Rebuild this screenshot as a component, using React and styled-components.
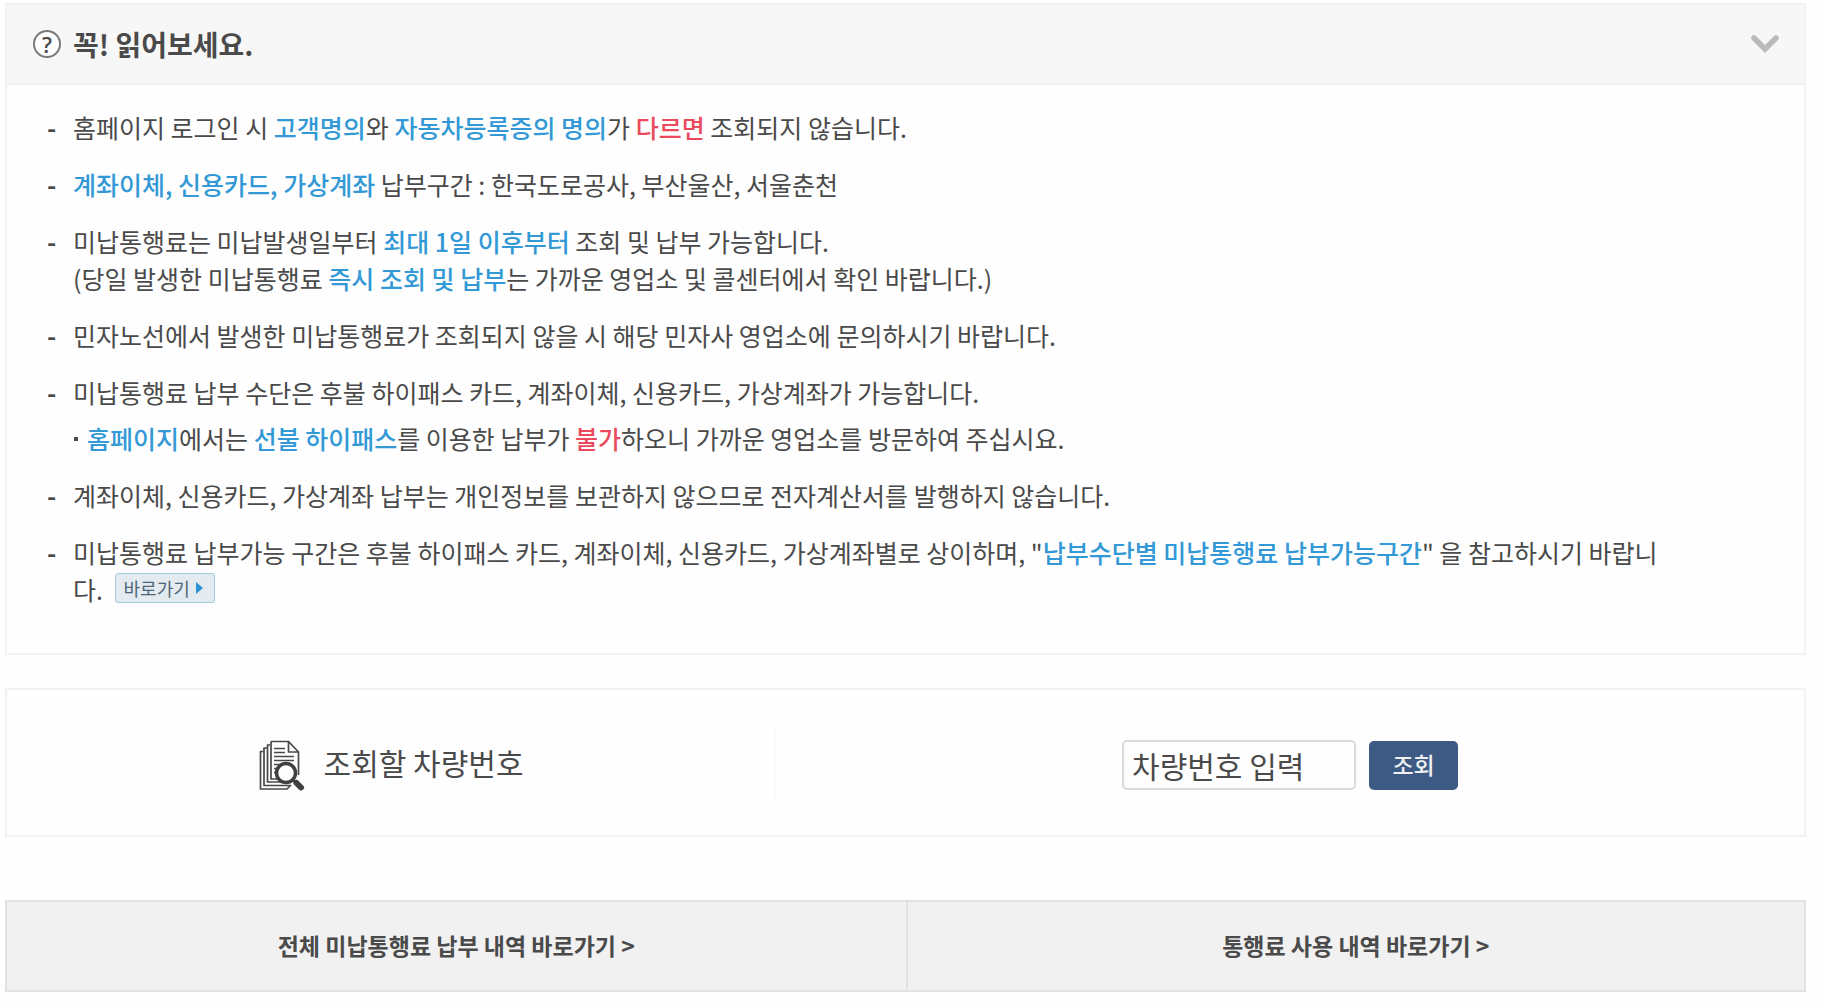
import React, { useState } from "react";
import styled, { createGlobalStyle } from "styled-components";

const GlobalStyle = createGlobalStyle`
  * {
    box-sizing: border-box;
  }

  body {
    margin: 0;
    background: #fefefe;
    color: #4a4a4a;
    font-family: "Noto Sans CJK KR", "Noto Sans", sans-serif;
    font-size: 25px;
    line-height: 37px;
  }

  button,
  input {
    font-family: inherit;
  }
`;

const Page = styled.main`
  padding: 3px 16px 14px 5px;
`;

const Panel = styled.section`
  border: 2px solid #f2f2f2;
  background: #fefefe;
`;

const NoticeTitle = styled.h2`
  margin: 0;
  font-size: 28px;
  line-height: 40px;
`;

const NoticeToggle = styled.button`
  display: flex;
  align-items: center;
  width: 100%;
  padding: 19px 23px 19px 26px;
  border: 0;
  border-bottom: 2px solid #f2f2f2;
  background: #f7f7f7;
  color: inherit;
  font: inherit;
  text-align: left;
  cursor: pointer;
`;

const QuestionMark = styled.span`
  display: flex;
  justify-content: center;
  align-items: center;
  width: 28px;
  height: 28px;
  margin-right: 12px;
  border: 2px solid #7a7a7a;
  border-radius: 100%;
  background: #fefefe;
  font-family: "Open Sans", sans-serif;
  font-size: 22px;
  font-weight: 600;
  line-height: 24px;
`;

const ToggleLabel = styled.span`
  flex-grow: 1;
`;

const NoticeList = styled.ul`
  display: flex;
  flex-direction: column;
  gap: 20px;
  margin: 0;
  padding: 24px 130px 45px 40px;
  list-style: none;
`;

const NoticeItem = styled.li`
  display: flex;

  &::before {
    content: "-";
    flex: 0 0 26px;
    font-weight: bold;
  }
`;

const SubNotice = styled.p`
  display: flex;
  align-items: center;
  gap: 9px;
  margin: 9px 0 0;

  &::before {
    content: "";
    width: 4px;
    height: 4px;
    margin-left: 1px;
    background: #4a4a4a;
  }
`;

const Blue = styled.strong`
  color: #3399d6;
  font-weight: 500;
`;

const Red = styled.strong`
  color: #ea4a5c;
  font-weight: 500;
`;

const ShortcutLink = styled.a`
  display: inline-flex;
  align-items: center;
  gap: 6px;
  height: 30px;
  margin-left: 6px;
  padding: 0 11px 0 8px;
  border: 1px solid #a3cbe0;
  border-radius: 3px;
  background: #e4ebf0;
  color: #4d6678;
  font-size: 18px;
  line-height: 28px;
  text-decoration: none;
  vertical-align: 4px;
`;

const SearchPanel = styled(Panel)`
  display: flex;
  align-items: center;
  margin-top: 33px;
  padding: 32px 0 33px;
`;

const SearchLabel = styled.label`
  display: flex;
  justify-content: center;
  align-items: center;
  gap: 19px;
  width: 42.8%;
  height: 80px;
  border-right: 1px solid #fafafa;
  font-size: 30px;
`;

const SearchForm = styled.form`
  display: flex;
  align-items: center;
  flex-grow: 1;
  justify-content: center;
  gap: 13px;
  padding-top: 6px;
`;

const CarNumberInput = styled.input`
  width: 234px;
  height: 50px;
  padding: 0 8px;
  border: 2px solid #dadada;
  border-radius: 5px;
  background: #fefefe;
  color: #4a4a4a;
  font-size: 30px;

  &::placeholder {
    color: #4a4a4a;
    opacity: 1;
  }
`;

const SearchButton = styled.button`
  width: 89px;
  height: 49px;
  padding: 0 0 2px;
  border: 0;
  border-radius: 5px;
  background: #3d5a85;
  color: #f0f0f0;
  font-size: 23px;
  font-weight: 500;
  cursor: pointer;
`;

const HistoryNav = styled.nav`
  display: grid;
  grid-template-columns: 1fr 1fr;
  margin-top: 63px;
  border: 2px solid #e2e2e2;
`;

const HistoryLink = styled.a`
  padding: 25px 0 26px;
  background: #f1f1f1;
  color: #4a4a4a;
  font-size: 23px;
  font-weight: bold;
  text-align: center;
  text-decoration: none;

  & + & {
    border-left: 2px solid #e2e2e2;
  }
`;

const ChevronIcon = () => (
  <svg width="32" height="22" viewBox="0 0 32 22" fill="none" aria-hidden="true">
    <path
      d="M5 5 L16 16 L27 5"
      stroke="#bababa"
      strokeWidth="5.5"
      strokeLinecap="round"
    />
  </svg>
);

const ArrowIcon = () => (
  <svg width="7" height="12" viewBox="0 0 7 12" aria-hidden="true">
    <path d="M0 0 L7 6 L0 12 Z" fill="#2f94d4" />
  </svg>
);

const DocumentSearchIcon = () => (
  <svg width="46" height="58" viewBox="0 -6 46 58" fill="none" aria-hidden="true">
    <g stroke="#484848" strokeWidth="1.7" strokeLinejoin="round">
      <path d="M4 12.500 H1.500 V50 H28 L32 46" />
      <path d="M8 9 H5 V46.500 H31" />
      <path d="M11 6 H8.500 V43 H23" />
      <path d="M12 2.500 H29.500 L39.500 13 V36 M12 2.500 V40 H20" />
      <path d="M29.500 2.500 V13 H39.500" />
      <path d="M15 9.500 H26 M15 13.500 H26 M15 17.500 H35 M15 21.500 H35 M15 25.500 H21 M15 29.500 H18 M15 33.500 H17" />
    </g>
    <circle cx="27" cy="34" r="9.500" fill="#fefefe" stroke="#404040" strokeWidth="3.500" />
    <path d="M34 41 L37 44" stroke="#404040" strokeWidth="3" />
    <path d="M37.500 44 L42 48.500" stroke="#404040" strokeWidth="6" strokeLinecap="round" />
  </svg>
);

const Notice = () => {
  const [open, setOpen] = useState(true);

  return (
    <Panel>
      <NoticeTitle>
        <NoticeToggle
          type="button"
          aria-expanded={open}
          onClick={() => setOpen(!open)}
        >
          <QuestionMark aria-hidden="true">?</QuestionMark>
          <ToggleLabel>꼭! 읽어보세요.</ToggleLabel>
          <ChevronIcon />
        </NoticeToggle>
      </NoticeTitle>
      {open && (
        <NoticeList>
          <NoticeItem>
            <div>
              홈페이지 로그인 시 <Blue>고객명의</Blue>와{" "}
              <Blue>자동차등록증의 명의</Blue>가 <Red>다르면</Red> 조회되지
              않습니다.
            </div>
          </NoticeItem>
          <NoticeItem>
            <div>
              <Blue>계좌이체, 신용카드, 가상계좌</Blue> 납부구간 :
              한국도로공사, 부산울산, 서울춘천
            </div>
          </NoticeItem>
          <NoticeItem>
            <div>
              미납통행료는 미납발생일부터 <Blue>최대 1일 이후부터</Blue> 조회 및
              납부 가능합니다.
              <br />
              (당일 발생한 미납통행료 <Blue>즉시 조회 및 납부</Blue>는 가까운
              영업소 및 콜센터에서 확인 바랍니다.)
            </div>
          </NoticeItem>
          <NoticeItem>
            <div>
              민자노선에서 발생한 미납통행료가 조회되지 않을 시 해당 민자사
              영업소에 문의하시기 바랍니다.
            </div>
          </NoticeItem>
          <NoticeItem>
            <div>
              미납통행료 납부 수단은 후불 하이패스 카드, 계좌이체, 신용카드,
              가상계좌가 가능합니다.
              <SubNotice>
                <span>
                  <Blue>홈페이지</Blue>에서는 <Blue>선불 하이패스</Blue>를
                  이용한 납부가 <Red>불가</Red>하오니 가까운 영업소를 방문하여
                  주십시요.
                </span>
              </SubNotice>
            </div>
          </NoticeItem>
          <NoticeItem>
            <div>
              계좌이체, 신용카드, 가상계좌 납부는 개인정보를 보관하지 않으므로
              전자계산서를 발행하지 않습니다.
            </div>
          </NoticeItem>
          <NoticeItem>
            <div>
              미납통행료 납부가능 구간은 후불 하이패스 카드, 계좌이체,
              신용카드, 가상계좌별로 상이하며, "
              <Blue>납부수단별 미납통행료 납부가능구간</Blue>" 을 참고하시기
              바랍니다.{" "}
              <ShortcutLink href="#sections">
                바로가기
                <ArrowIcon />
              </ShortcutLink>
            </div>
          </NoticeItem>
        </NoticeList>
      )}
    </Panel>
  );
};

const CarSearch = () => {
  const [carNumber, setCarNumber] = useState("");

  return (
    <SearchPanel>
      <SearchLabel htmlFor="car-number">
        <DocumentSearchIcon />
        조회할 차량번호
      </SearchLabel>
      <SearchForm onSubmit={(e) => e.preventDefault()}>
        <CarNumberInput
          id="car-number"
          type="text"
          placeholder="차량번호 입력"
          value={carNumber}
          onChange={(e) => setCarNumber(e.target.value)}
        />
        <SearchButton type="submit">조회</SearchButton>
      </SearchForm>
    </SearchPanel>
  );
};

const App = () => {
  return (
    <Page>
      <GlobalStyle />
      <Notice />
      <CarSearch />
      <HistoryNav>
        <HistoryLink href="#payments">
          전체 미납통행료 납부 내역 바로가기 &gt;
        </HistoryLink>
        <HistoryLink href="#usage">통행료 사용 내역 바로가기 &gt;</HistoryLink>
      </HistoryNav>
    </Page>
  );
};

export default App;
